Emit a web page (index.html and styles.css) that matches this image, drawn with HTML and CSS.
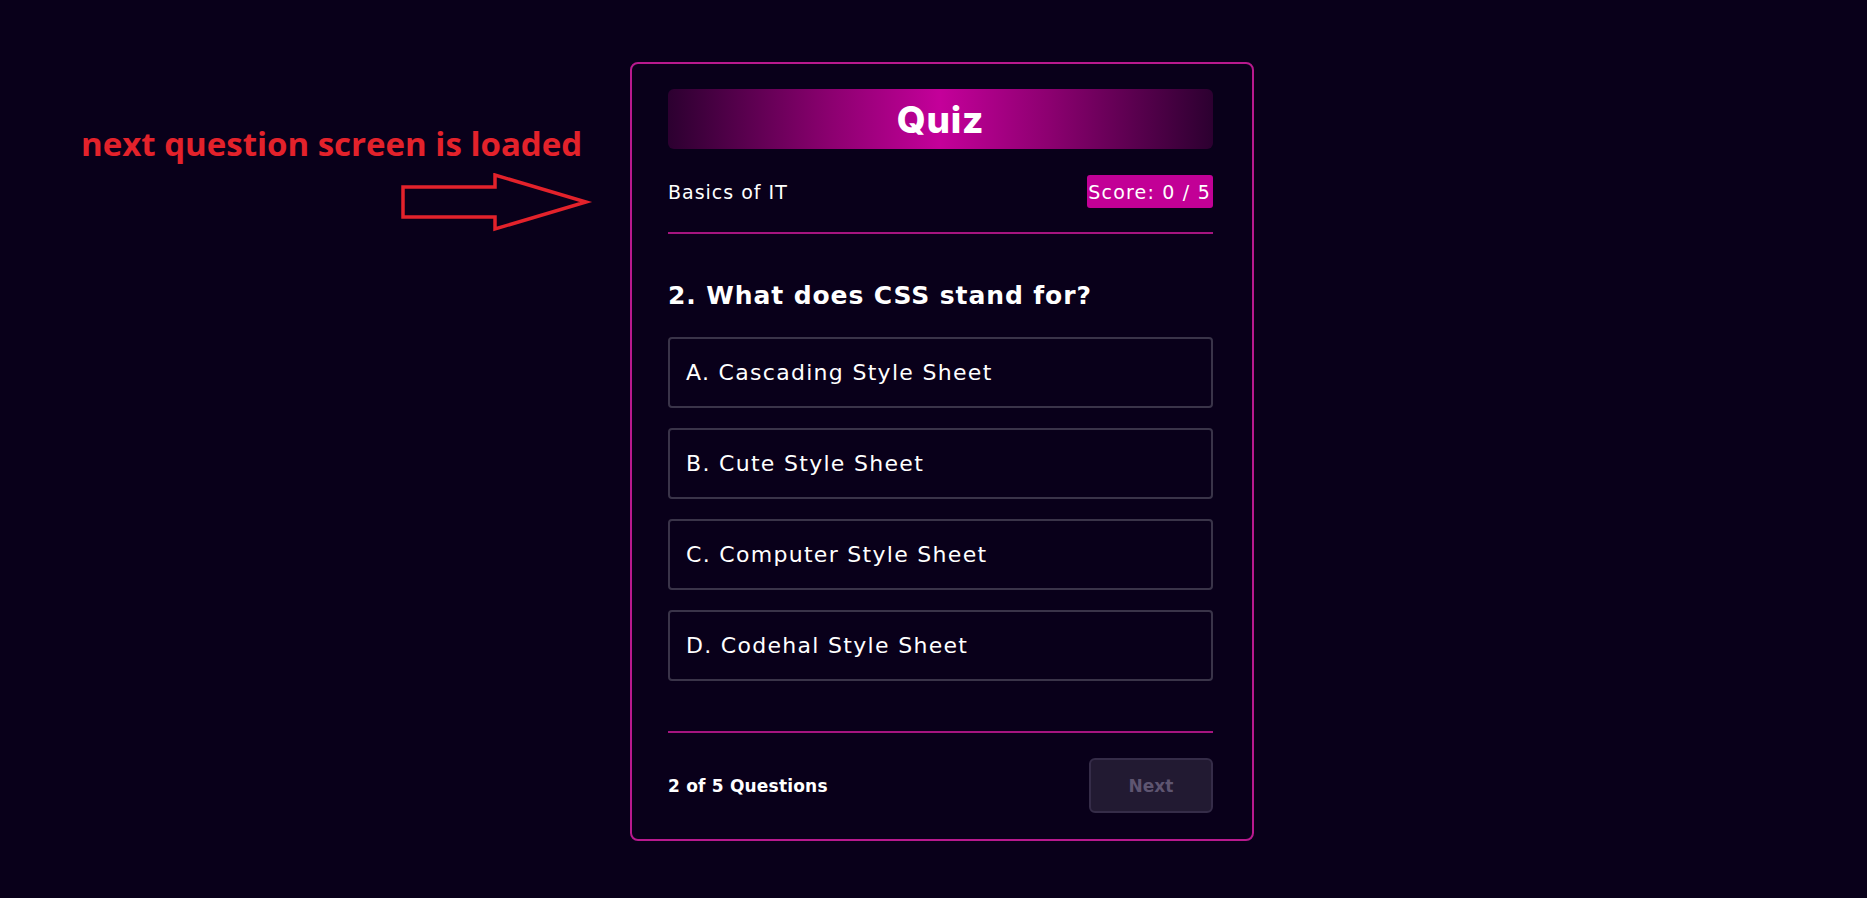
FILE: index.html
```html
<!DOCTYPE html>
<html lang="en">
<head>
<meta charset="utf-8">
<title>Quiz</title>
<link rel="stylesheet" href="styles.css">
</head>
<body>
<div class="note">
  <div class="note-text">next question screen is loaded</div>
  <svg class="note-arrow" width="192" height="60" viewBox="0 0 192 60">
    <polygon points="2,14 94,14 94,2 185,29 94,56 94,44 2,44" fill="none" stroke="#e3222b" stroke-width="3.5" stroke-linejoin="miter"/>
  </svg>
</div>
<main class="card">
  <h1 class="title">Quiz</h1>
  <div class="info">
    <span class="topic">Basics of IT</span>
    <span class="score">Score: 0 / 5</span>
  </div>
  <div class="divider"></div>
  <h2 class="question">2. What does CSS stand for?</h2>
  <div class="options">
    <div class="option">A. Cascading Style Sheet</div>
    <div class="option">B. Cute Style Sheet</div>
    <div class="option">C. Computer Style Sheet</div>
    <div class="option">D. Codehal Style Sheet</div>
  </div>
  <div class="divider divider-bottom"></div>
  <div class="footer">
    <span class="count">2 of 5 Questions</span>
    <button class="next">Next</button>
  </div>
</main>
</body>
</html>
```
FILE: styles.css
```css
* { box-sizing: border-box; }
html, body {
  margin: 0;
  padding: 0;
  background: #09001a;
  color: #ffffff;
  font-family: "DejaVu Sans", "Inter", sans-serif;
}
body {
  min-height: 898px;
  padding-top: 62px;
  padding-left: 630px;
}
.note {
  position: absolute;
  left: 81px;
  top: 122px;
}
.note-text {
  font-family: "Open Sans", sans-serif;
  font-weight: 700;
  font-size: 33px;
  color: #e3222b;
  letter-spacing: 0;
  line-height: 44px;
}
.note-arrow {
  position: absolute;
  left: 320px;
  top: 51px;
}
.card {
  width: 624px;
  height: 779px;
  border: 2px solid #b8198e;
  border-radius: 8px;
  padding: 25px 39px 0 36px;
  display: flex;
  flex-direction: column;
}
.title {
  margin: 0;
  height: 60px;
  border-radius: 6px;
  background: linear-gradient(90deg, #2c0030 0%, #8c0070 30%, #c4009a 50%, #8c0070 70%, #2c0030 100%);
  display: flex;
  align-items: center;
  justify-content: center;
  font-family: "Inter", sans-serif;
  font-size: 37px;
  font-weight: 800;
  letter-spacing: 0.8px;
}
.info {
  margin-top: 26px;
  height: 33px;
  display: flex;
  justify-content: space-between;
  align-items: center;
  font-size: 19px;
  font-weight: 400;
}
.topic {
  letter-spacing: 1px;
}
.score {
  background: #c20096;
  height: 33px;
  padding: 0 2px 0 1px;
  border-radius: 3px;
  display: flex;
  align-items: center;
  font-size: 19px;
  letter-spacing: 1.2px;
}
.divider {
  margin-top: 24px;
  height: 2px;
  background: #a5147f;
  flex-shrink: 0;
}
.question {
  margin: 44px 0 0;
  font-size: 25px;
  font-weight: 700;
  line-height: 36px;
  letter-spacing: 0.9px;
}
.options {
  margin-top: 23px;
  display: flex;
  flex-direction: column;
  gap: 20px;
}
.option {
  height: 71px;
  border: 2px solid #3a3449;
  border-radius: 4px;
  padding-left: 16px;
  display: flex;
  align-items: center;
  font-size: 22px;
  font-weight: 400;
  letter-spacing: 1.3px;
}
.divider-bottom {
  margin-top: 50px;
}
.footer {
  margin-top: 25px;
  display: flex;
  justify-content: space-between;
  align-items: center;
}
.count {
  font-size: 17px;
  font-weight: 700;
  letter-spacing: 0.2px;
}
.next {
  width: 124px;
  height: 55px;
  border: 2px solid #352c48;
  border-radius: 6px;
  background: #221a32;
  color: #5e5570;
  font-family: inherit;
  font-size: 17px;
  font-weight: 700;
}
```
